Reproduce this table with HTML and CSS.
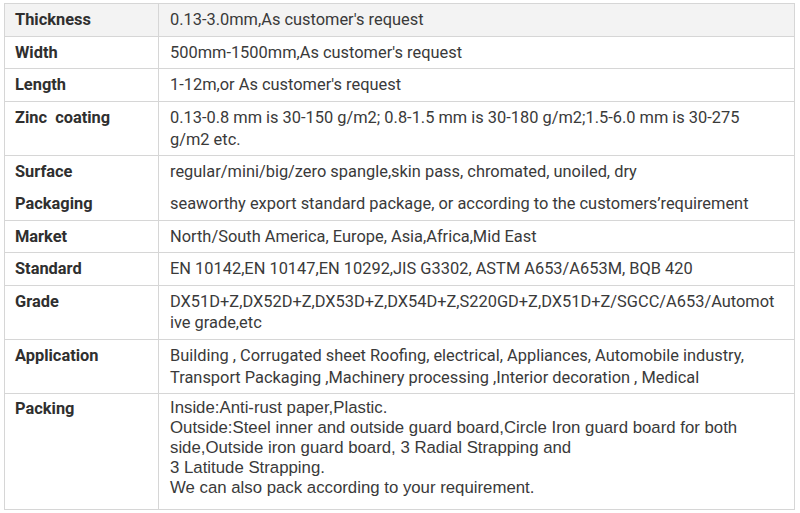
FILE: index.html
```html
<!DOCTYPE html>
<html>
<head>
<meta charset="utf-8">
<link rel="stylesheet" href="styles.css">
</head>
<body>
<table class="spec">
  <tr class="head"><th>Thickness</th><td>0.13-3.0mm,As customer's request</td></tr>
  <tr><th>Width</th><td>500mm-1500mm,As customer's request</td></tr>
  <tr><th>Length</th><td>1-12m,or As customer's request</td></tr>
  <tr><th>Zinc&nbsp; coating</th><td>0.13-0.8 mm is 30-150 g/m2; 0.8-1.5 mm is 30-180 g/m2;1.5-6.0 mm is 30-275<br>g/m2 etc.</td></tr>
  <tr class="joined"><th>Surface</th><td>regular/mini/big/zero spangle,skin pass, chromated, unoiled, dry</td></tr>
  <tr><th>Packaging</th><td>seaworthy export standard package, or according to the customers’requirement</td></tr>
  <tr><th>Market</th><td>North/South America, Europe, Asia,Africa,Mid East</td></tr>
  <tr><th>Standard</th><td>EN 10142,EN 10147,EN 10292,JIS G3302, ASTM A653/A653M, BQB 420</td></tr>
  <tr><th>Grade</th><td>DX51D+Z,DX52D+Z,DX53D+Z,DX54D+Z,S220GD+Z,DX51D+Z/SGCC/A653/Automot<br>ive grade,etc</td></tr>
  <tr><th>Application</th><td>Building , Corrugated sheet Roofing, electrical, Appliances, Automobile industry,<br>Transport Packaging ,Machinery processing ,Interior decoration , Medical</td></tr>
  <tr class="arial"><th>Packing</th><td>Inside:Anti-rust paper,Plastic.<br>Outside:Steel inner and outside guard board,Circle Iron guard board for both<br>side,Outside iron guard board, 3 Radial Strapping and<br>3 Latitude Strapping.<br>We can also pack according to your requirement.</td></tr>
</table>
</body>
</html>
```
FILE: styles.css
```css
html, body {
  margin: 0;
  padding: 0;
  background: #fff;
}
body {
  padding: 3px 0 0 4px;
  font-family: Roboto, "Liberation Sans", sans-serif;
  color: #333;
}
.spec {
  border-collapse: collapse;
  width: 791px;
  table-layout: fixed;
  border: 1px solid #d6d6d6;
}
.spec th,
.spec td {
  border-top: 1px solid #d6d6d6;
  vertical-align: top;
  text-align: left;
  padding: 5px 11px 5.3px 11px;
  line-height: 21.4px;
  font-size: 16.4px;
  white-space: nowrap;
  overflow: hidden;
}
.spec th {
  width: 132px;
  padding-left: 10px;
  font-weight: bold;
  border-right: 1px solid #d6d6d6;
  color: #2f2f2f;
}
.spec td {
  color: #3a3a3a;
}
.spec .head th,
.spec .head td {
  background: #f3f3f3;
}
.spec tr.joined + tr th,
.spec tr.joined + tr td {
  border-top: none;
}
.spec .arial td {
  font-family: "Liberation Sans", Arial, sans-serif;
  font-size: 16.8px;
  line-height: 20px;
  padding-top: 4px;
  padding-bottom: 10.5px;
}
.spec .arial th {
  padding-top: 4px;
}
```
